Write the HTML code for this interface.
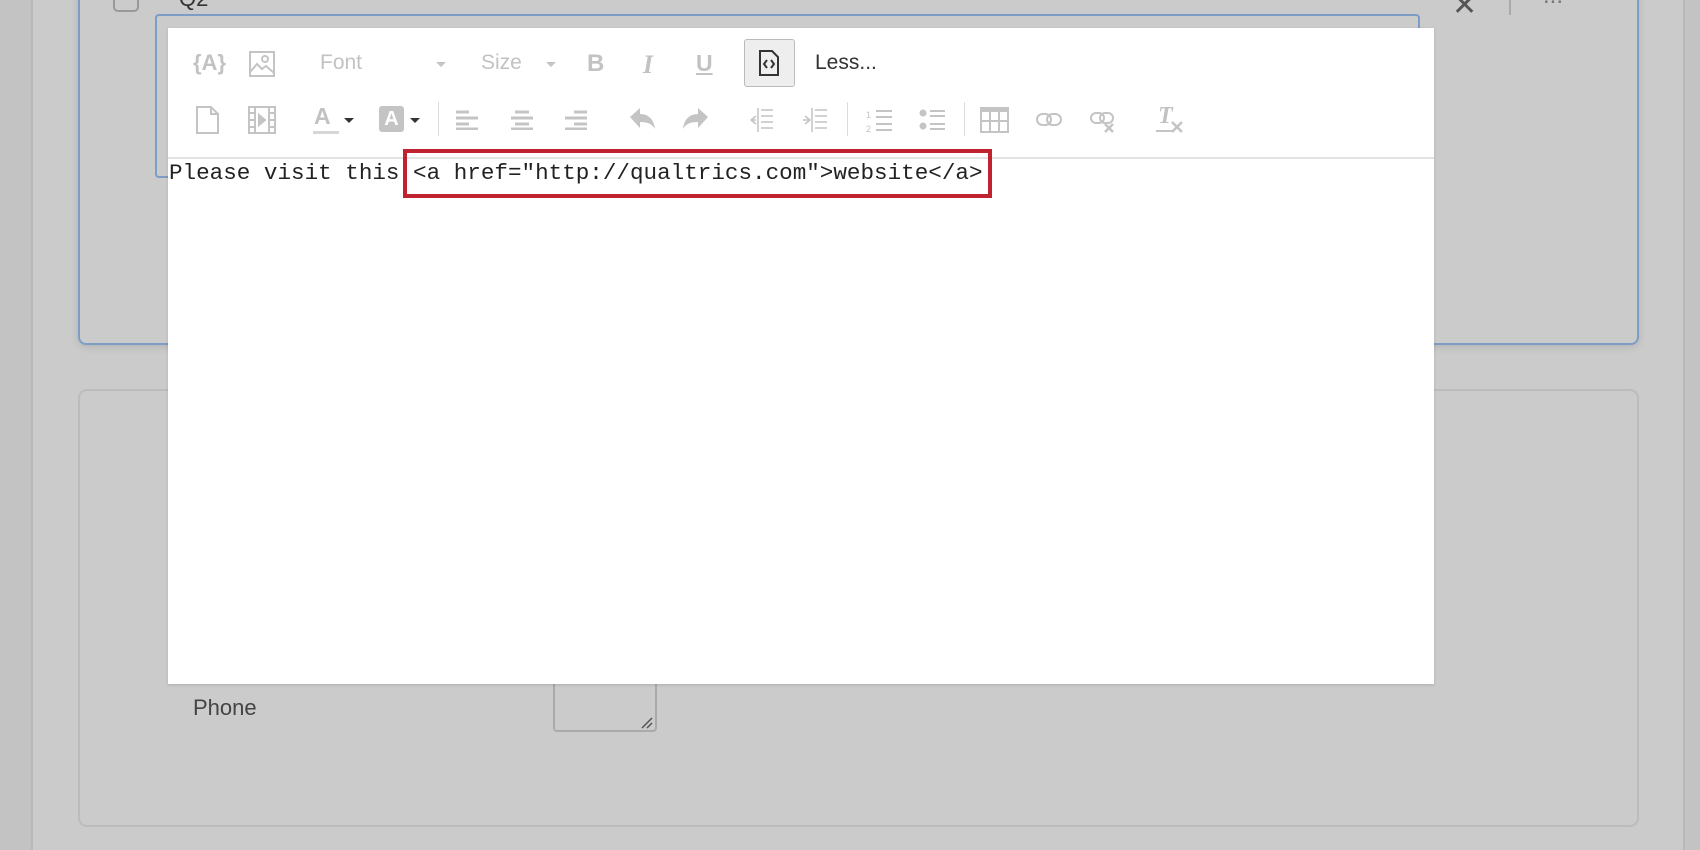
<!DOCTYPE html>
<html><head><meta charset="utf-8"><style>
*{margin:0;padding:0;box-sizing:border-box}
body{width:1700px;height:850px;overflow:hidden;background:#cbcbcb;position:relative;font-family:"Liberation Sans",sans-serif}
.a{position:absolute}
.ic{position:absolute;fill:none;stroke:#c4c4c4;stroke-width:2}
.t{position:absolute;color:#c2c2c2;font-size:21px}
.car{position:absolute;width:0;height:0;border-left:5px solid transparent;border-right:5px solid transparent;border-top:5px solid #c4c4c4}
.sep{position:absolute;width:1px;height:34px;background:#dcdcdc;top:102px}
</style></head><body>
<div class="a" style="left:0;top:0;width:33px;height:850px;background:#c3c3c3;border-right:2px solid #b8b8b8"></div>
<div class="a" style="left:1683px;top:0;width:17px;height:850px;background:#c3c3c3;border-left:2px solid #b8b8b8"></div>
<div class="a" style="left:78px;top:-20px;width:1561px;height:365px;border:2px solid #7b9dc6;border-radius:8px;box-shadow:0 2px 8px rgba(0,0,0,.12)"></div>
<div class="a" style="left:113px;top:-14px;width:26px;height:26px;border:2px solid #999;border-radius:5px"></div>
<div class="a" style="left:179px;top:-14px;font-size:22px;color:#333">Q2</div>
<div class="a" style="left:1452px;top:-12px;font-size:30px;color:#555">✕</div>
<div class="a" style="left:1509px;top:-5px;width:2px;height:20px;background:#aaa"></div>
<div class="a" style="left:1543px;top:-18px;font-size:24px;color:#777">...</div>
<div class="a" style="left:155px;top:14px;width:1265px;height:164px;border:2px solid #7b9dc6;border-radius:4px"></div>
<div class="a" style="left:78px;top:389px;width:1561px;height:438px;border:2px solid #bcbcbc;border-radius:9px"></div>
<div class="a" style="left:193px;top:695px;font-size:22px;color:#444">Phone</div>
<div class="a" style="left:553px;top:670px;width:104px;height:62px;border:2px solid #aaa;border-radius:4px"></div>
<svg class="a" style="left:640px;top:716px" width="14" height="14"><path d="M2 12L12 2M7 12L12 7" stroke="#555" stroke-width="1.5"/></svg>
<div class="a" style="left:168px;top:28px;width:1266px;height:656px;background:#fff;box-shadow:0 1px 3px rgba(0,0,0,.15)"></div>
<div class="a" style="left:168px;top:157px;width:1266px;height:2px;background:#e3e3e3"></div>
<div class="t" style="left:193px;top:50px;font-weight:bold;font-size:22px">{A}</div>
<svg class="ic" style="left:249px;top:51px" width="26" height="26"><rect x="1" y="1" width="24" height="24"/><path d="M1 21l7-8 5 5 4-3 8 7"/><circle cx="16" cy="8" r="3"/></svg>
<div class="t" style="left:320px;top:51px">Font</div>
<div class="car" style="left:436px;top:62px"></div>
<div class="t" style="left:481px;top:51px">Size</div>
<div class="car" style="left:546px;top:62px"></div>
<div class="t" style="left:587px;top:50px;font-weight:bold;font-size:24px">B</div>
<div class="t" style="left:643px;top:50px;font-style:italic;font-family:'Liberation Serif',serif;font-weight:bold;font-size:26px">I</div>
<div class="t" style="left:696px;top:50px;font-size:23px;text-decoration:underline;font-weight:bold">U</div>
<div class="a" style="left:744px;top:39px;width:51px;height:48px;background:#eee;border:1px solid #bbb;border-radius:3px"></div>
<svg class="a" style="left:759px;top:50px" width="20" height="26"><path d="M1 1h12l6 6v18H1z" fill="none" stroke="#333" stroke-width="2"/><path d="M8 10l-3 4 3 4M12 10l3 4-3 4" fill="none" stroke="#333" stroke-width="2"/></svg>
<div class="a" style="left:815px;top:51px;font-size:21px;color:#333">Less...</div>
<svg class="ic" style="left:196px;top:106px" width="24" height="28"><path d="M1 1h14l7 7v19H1z M15 1v7h7"/></svg>
<svg class="ic" style="left:248px;top:106px" width="28" height="28"><rect x="1" y="1" width="26" height="26"/><path d="M7 1v26M21 1v26M1 7h6M1 14h6M1 21h6M21 7h6M21 14h6M21 21h6"/><path d="M11 9l6 5-6 5z" fill="#c4c4c4"/></svg>
<div class="t" style="left:314px;top:103px;font-weight:bold;font-size:23px">A</div>
<div class="a" style="left:313px;top:131px;width:26px;height:3px;background:#d6d6d6"></div>
<div class="car" style="left:344px;top:118px;border-top-color:#333"></div>
<div class="a" style="left:379px;top:106px;width:25px;height:26px;background:#c4c4c4;border-radius:3px;color:#fff;font-weight:bold;font-size:20px;text-align:center;line-height:26px">A</div>
<div class="car" style="left:410px;top:118px;border-top-color:#333"></div>
<div class="sep" style="left:438px"></div>
<svg class="a" style="left:456px;top:110px" width="22" height="20"><path d="M0 2h13M0 8h22M0 14h13M0 19h22" stroke="#c4c4c4" stroke-width="3"/></svg>
<svg class="a" style="left:511px;top:110px" width="22" height="20"><path d="M4 2h14M0 8h22M4 14h14M0 19h22" stroke="#c4c4c4" stroke-width="3"/></svg>
<svg class="a" style="left:565px;top:110px" width="22" height="20"><path d="M9 2h13M0 8h22M9 14h13M0 19h22" stroke="#c4c4c4" stroke-width="3"/></svg>
<svg class="a" style="left:630px;top:108px" width="26" height="22"><path d="M0 9L10 0v6c9 0 14 6 15 15-3-5-7-7-15-7v6z" fill="#c4c4c4"/></svg>
<svg class="a" style="left:682px;top:108px" width="26" height="22"><path d="M26 9L16 0v6C7 6 2 12 1 21c3-5 7-7 15-7v6z" fill="#c4c4c4"/></svg>
<svg class="ic" style="left:748px;top:107px;stroke-width:1.5" width="26" height="26"><path d="M10 1v24M13 3h12M13 9h12M13 15h12M13 21h12M8 9l-5 4 5 4M3 13h5"/></svg>
<svg class="ic" style="left:802px;top:107px;stroke-width:1.5" width="26" height="26"><path d="M10 1v24M13 3h12M13 9h12M13 15h12M13 21h12M3 9l5 4-5 4M1 13h7"/></svg>
<div class="sep" style="left:847px"></div>
<svg class="ic" style="left:866px;top:107px" width="26" height="26"><path d="M10 4h16M10 10h16M10 17h16M10 23h16"/><text x="0" y="11" font-size="9" fill="#c4c4c4" stroke="none">1</text><text x="0" y="25" font-size="9" fill="#c4c4c4" stroke="none">2</text></svg>
<svg class="ic" style="left:919px;top:107px" width="26" height="26"><circle cx="4" cy="6" r="3.5" fill="#c4c4c4" stroke="none"/><circle cx="4" cy="19" r="3.5" fill="#c4c4c4" stroke="none"/><path d="M11 4h15M11 9h15M11 17h15M11 22h15"/></svg>
<div class="sep" style="left:964px"></div>
<svg class="a" style="left:980px;top:107px" width="29" height="26"><rect x="0" y="0" width="29" height="4" fill="#c4c4c4"/><path d="M1 4h27v21H1zM1 14h27M10 4v21M19 4v21" fill="none" stroke="#c4c4c4" stroke-width="2"/></svg>
<svg class="ic" style="left:1036px;top:111px" width="26" height="18"><rect x="1" y="3" width="14" height="11" rx="5.5"/><rect x="11" y="3" width="14" height="11" rx="5.5"/></svg>
<svg class="ic" style="left:1090px;top:110px" width="28" height="24"><rect x="1" y="3" width="13" height="10" rx="5"/><rect x="10" y="3" width="13" height="10" rx="5"/><path d="M15 14l8 8M23 14l-8 8" stroke-width="2.5"/></svg>
<div class="t" style="left:1158px;top:103px;font-style:italic;font-weight:bold;font-size:24px;font-family:'Liberation Serif',serif">T</div>
<div class="a" style="left:1156px;top:130px;width:16px;height:2px;background:#c4c4c4"></div>
<svg class="ic" style="left:1171px;top:120px;stroke-width:2.5" width="12" height="14"><path d="M1 2l10 10M11 2L1 12"/></svg>
<div class="a" style="left:169px;top:160px;font-family:'Liberation Mono',monospace;font-size:22.6px;color:#222;white-space:pre;line-height:26px">Please visit this &lt;a href="http://qualtrics.com"&gt;website&lt;/a&gt;!</div>
<div class="a" style="left:403px;top:149px;width:589px;height:49px;border:4px solid #c0232f"></div>
</body></html>
